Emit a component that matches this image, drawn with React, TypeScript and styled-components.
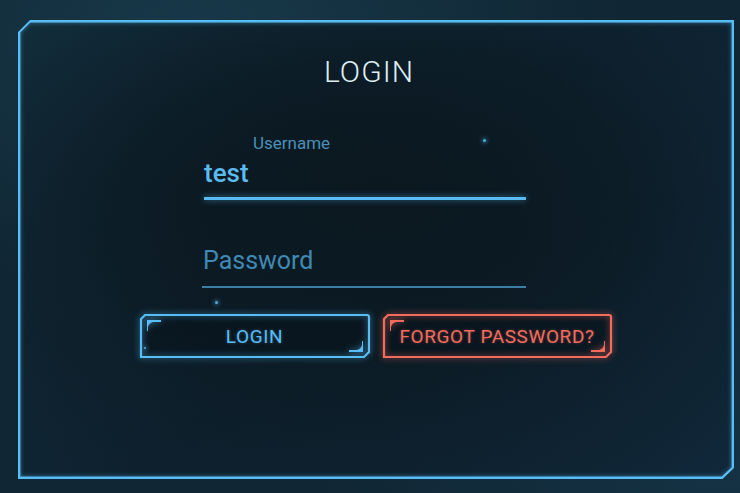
import React from "react";
import styled, { createGlobalStyle, css } from "styled-components";

const GlobalStyle = createGlobalStyle`
  html, body {
    margin: 0;
    padding: 0;
    width: 740px;
    height: 493px;
    overflow: hidden;
  }
  body {
    font-family: Roboto, "Noto Sans", sans-serif;
    background:
      radial-gradient(ellipse 420px 260px at 200px 40px, #18394a 0%, rgba(24,57,74,0) 100%),
      radial-gradient(ellipse 400px 300px at 720px 470px, #143244 0%, rgba(20,50,68,0) 100%),
      #102634;
  }
`;

const BLUE = "#58bcf5";
const RED = "#f26b5d";

const Page = styled.div`
  width: 740px;
  height: 493px;
  padding: 20px 0 0 18px;
  box-sizing: border-box;
`;

const Panel = styled.div`
  position: relative;
  width: 716px;
  height: 459px;
  box-sizing: border-box;
  padding-top: 37px;
  display: flex;
  flex-direction: column;
  clip-path: polygon(0 12px, 12px 0, 100% 0, 100% calc(100% - 11px), calc(100% - 11px) 100%, 0 100%);
  background:
    radial-gradient(ellipse 330px 200px at 360px 170px, #0b1820 0%, rgba(11,24,32,0) 100%),
    radial-gradient(ellipse 500px 320px at 330px 220px, #0c1b25 30%, rgba(12,27,37,0) 100%),
    linear-gradient(135deg, #12303d 0%, #0e2230 50%, #10283a 100%);
`;

const FrameSvg = styled.svg`
  position: absolute;
  inset: 0;
  pointer-events: none;
  overflow: visible;
  filter: drop-shadow(0 0 2px rgba(88, 188, 245, 0.6));
`;

const Title = styled.h1`
  margin: 0;
  padding-right: 14px;
  text-align: center;
  font-family: Roboto, sans-serif;
  font-weight: 300;
  font-size: 30px;
  line-height: 30px;
  letter-spacing: 1px;
  color: #dfeef6;
`;

const Form = styled.div`
  margin-left: 185px;
  width: 323px;
  display: flex;
  flex-direction: column;
`;

const Field = styled.div<{ $top: number }>`
  display: flex;
  flex-direction: column;
  margin-top: ${(p) => p.$top}px;
`;

const Label = styled.div`
  margin-left: 50px;
  font-size: 17px;
  line-height: 20px;
  color: #4a90bb;
`;

const Value = styled.div<{ $placeholder?: boolean }>`
  margin-top: ${(p) => (p.$placeholder ? 0 : 5)}px;
  padding-left: ${(p) => (p.$placeholder ? 0 : 1)}px;
  font-size: ${(p) => (p.$placeholder ? 25 : 26)}px;
  line-height: 30px;
  font-weight: ${(p) => (p.$placeholder ? 400 : 500)};
  color: ${(p) => (p.$placeholder ? "#4089b4" : "#5cbbef")};
`;

const Underline = styled.div<{ $active?: boolean }>`
  margin-top: ${(p) => (p.$active ? 9 : 10)}px;
  margin-left: ${(p) => (p.$active ? 1 : -1)}px;
  height: ${(p) => (p.$active ? 3 : 2)}px;
  background: ${(p) => (p.$active ? "#58bbf3" : "#3b7fa8")};
  ${(p) =>
    p.$active &&
    css`
      box-shadow: 0 0 6px rgba(88, 187, 243, 0.6);
    `}
`;

const Buttons = styled.div`
  margin-top: 26px;
  display: flex;
  justify-content: center;
  gap: 13px;
  padding-right: 1px;
`;

const Btn = styled.button<{ $color: string; $w: number }>`
  position: relative;
  width: ${(p) => p.$w}px;
  height: 44px;
  border: none;
  padding: 0;
  background: rgba(8, 20, 28, 0.6);
  font-family: Roboto, sans-serif;
  font-weight: 400;
  font-size: 19px;
  letter-spacing: 0.6px;
  color: ${(p) => p.$color};
  text-shadow: 0 0 3px ${(p) => p.$color}66;
  cursor: pointer;
`;

const BtnSvg = styled.svg<{ $color: string }>`
  position: absolute;
  inset: 0;
  overflow: visible;
  pointer-events: none;
  filter: drop-shadow(0 0 3px ${(p) => p.$color}bb);
`;

const Star = styled.span<{ $x: number; $y: number; $s?: number }>`
  position: absolute;
  left: ${(p) => p.$x}px;
  top: ${(p) => p.$y}px;
  width: ${(p) => p.$s ?? 3}px;
  height: ${(p) => p.$s ?? 3}px;
  border-radius: 50%;
  background: #4fa9dc;
  box-shadow: 0 0 4px 1px rgba(79, 169, 220, 0.6);
`;

function ButtonFrame({ color, w }: { color: string; w: number }) {
  const h = 44;
  return (
    <BtnSvg $color={color} width={w} height={h} viewBox={`0 0 ${w} ${h}`}>
      <path
        d={`M1 5 L5 1 H${w - 3} Q${w - 1} 1 ${w - 1} 3 V${h - 6} L${w - 6} ${h - 1} H1 Z`}
        fill="none"
        stroke={color}
        strokeWidth={2.2}
      />
      <path d="M7 6 H21 V8 H13 Q9 9 8 13 V17 H7 Z" fill={color} />
      <path
        d={`M${w - 7} ${h - 6} H${w - 21} V${h - 8} H${w - 13} Q${w - 9} ${h - 9} ${w - 8} ${h - 13} V${h - 17} H${w - 7} Z`}
        fill={color}
      />
    </BtnSvg>
  );
}

export default function App() {
  return (
    <>
      <GlobalStyle />
      <Page>
        <Panel>
          <Title>LOGIN</Title>
          <Form>
            <Field $top={46}>
              <Label>Username</Label>
              <Value>test</Value>
              <Underline $active />
            </Field>
            <Field $top={46}>
              <Value $placeholder>Password</Value>
              <Underline />
            </Field>
          </Form>
          <Buttons>
            <Btn $color={BLUE} $w={230}>
              <ButtonFrame color={BLUE} w={230} />
              LOGIN
            </Btn>
            <Btn $color={RED} $w={229}>
              <ButtonFrame color={RED} w={229} />
              FORGOT PASSWORD?
            </Btn>
          </Buttons>
          <Star $x={465} $y={119} />
          <Star $x={197} $y={281} />
          <Star $x={126} $y={327} $s={2} />
          <FrameSvg width={716} height={459} viewBox="0 0 716 459">
            <path
              d="M1.2 12 L12 1.2 H714.8 V448 L704 457.8 H1.2 Z"
              fill="none"
              stroke={BLUE}
              strokeWidth={2.4}
            />
          </FrameSvg>
        </Panel>
      </Page>
    </>
  );
}
